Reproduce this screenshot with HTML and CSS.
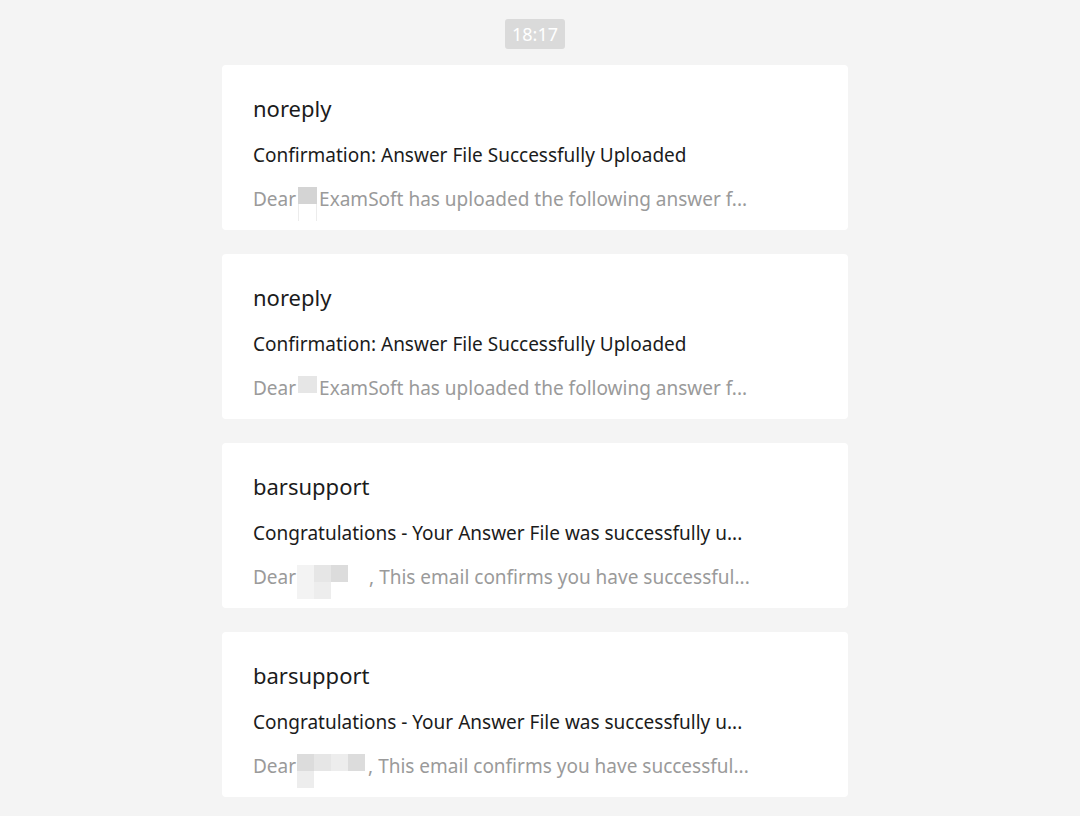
FILE: index.html
```html
<!DOCTYPE html>
<html>
<head>
    <title>Mail notifications</title>
    <link rel="stylesheet" href="styles.css">
</head>
<body>

<div class="feed">
    <div class="time"><span>18:17</span></div>

    <div class="card">
        <div class="sender">noreply</div>
        <div class="subject">Confirmation: Answer File Successfully Uploaded</div>
        <div class="preview">Dear<span class="mask mask-a"><i class="px g1"></i><i class="px w"></i></span>ExamSoft has uploaded the following answer f...</div>
    </div>

    <div class="card">
        <div class="sender">noreply</div>
        <div class="subject">Confirmation: Answer File Successfully Uploaded</div>
        <div class="preview">Dear<span class="mask mask-a"><i class="px g3"></i></span>ExamSoft has uploaded the following answer f...</div>
    </div>

    <div class="card">
        <div class="sender">barsupport</div>
        <div class="subject">Congratulations - Your Answer File was successfully u...</div>
        <div class="preview">Dear<span class="mask mask-b">
            <span class="row"><i class="px g5"></i><i class="px g3"></i><i class="px g2"></i></span>
            <span class="row"><i class="px g5"></i><i class="px g4"></i></span>
        </span>, This email confirms you have successful...</div>
    </div>

    <div class="card">
        <div class="sender">barsupport</div>
        <div class="subject">Congratulations - Your Answer File was successfully u...</div>
        <div class="preview">Dear<span class="mask mask-c">
            <span class="row"><i class="px g2"></i><i class="px g3"></i><i class="px g4"></i><i class="px g2"></i></span>
            <span class="row"><i class="px g4"></i></span>
        </span>, This email confirms you have successful...</div>
    </div>
</div>

</body>
</html>
```

FILE: styles.css
```css
body {
    margin: 0;
    background-color: #f4f4f4;
    font-family: "Noto Sans", "Open Sans", sans-serif;
}

.feed {
    width: 626px;
    margin-left: calc(50% - 318px);
    padding: 19px 0 18px 0;
    display: flex;
    flex-direction: column;
    gap: 24px;
}

.time {
    display: flex;
    justify-content: center;
    margin-bottom: -8px;
}

.time span {
    background-color: #dadada;
    color: #ffffff;
    font-size: 18px;
    line-height: 30px;
    height: 30px;
    padding: 0 7px;
    border-radius: 3px;
}

.card {
    background-color: #ffffff;
    border-radius: 4px;
    padding: 29px 31px 18px 31px;
    height: 118px;
}

.sender {
    font-size: 22px;
    line-height: 28px;
    color: #1b1b1b;
}

.subject {
    margin-top: 20px;
    font-size: 19px;
    line-height: 26px;
    color: #1b1b1b;
    white-space: nowrap;
}

.preview {
    margin-top: 18px;
    height: 26px;
    font-size: 19px;
    line-height: 26px;
    color: #9a9a9a;
    white-space: nowrap;
    display: flex;
    align-items: flex-start;
}

.mask {
    display: inline-flex;
    flex-direction: column;
    margin-top: 1px;
}

.mask-a {
    width: 19px;
    margin-left: 2px;
    margin-right: 2px;
}

.mask-b {
    width: 55px;
    margin-left: 1px;
    margin-right: 17px;
}

.mask-c {
    width: 71px;
    margin-left: 1px;
    margin-right: 0;
}

.mask .row {
    display: flex;
}

.px {
    display: block;
    width: 17px;
    height: 17px;
    flex-shrink: 0;
}

.mask-a .px {
    width: 19px;
}

.px.w {
    border-left: 1px solid #ececec;
    border-right: 1px solid #ececec;
    box-sizing: border-box;
}

.g1 { background-color: #d4d4d4; }
.g2 { background-color: #dcdcdc; }
.g3 { background-color: #e6e6e6; }
.g4 { background-color: #ededed; }
.g5 { background-color: #f3f3f3; }
```
